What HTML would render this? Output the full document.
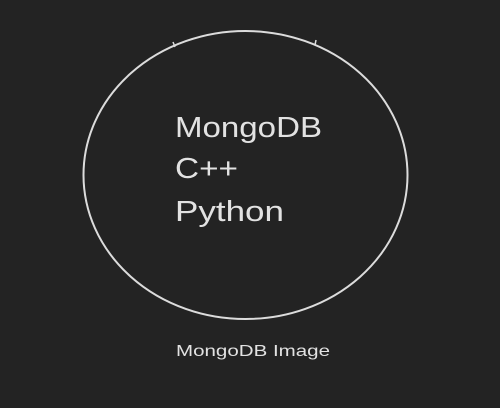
<!DOCTYPE html>
<html><head><style>
body{margin:0;background:#232323;width:500px;height:403px;overflow:hidden}
</style></head><body>
<svg width="500" height="403" xmlns="http://www.w3.org/2000/svg">
<rect width="500" height="403" fill="#232323"/>
<ellipse cx="245.5" cy="175" rx="162" ry="144" fill="none" stroke="#dcdcdc" stroke-width="2"/>
<path d="M173 42 l2 5 M316 40 l-1 5" stroke="#dcdcdc" stroke-width="1.5"/>
<g font-family="'Liberation Sans',sans-serif" fill="#e2e2e2">
<text x="175" y="137" font-size="29" textLength="147" lengthAdjust="spacingAndGlyphs">MongoDB</text>
<text x="175" y="178" font-size="29" textLength="63" lengthAdjust="spacingAndGlyphs">C++</text>
<text x="175" y="221" font-size="29" textLength="109" lengthAdjust="spacingAndGlyphs">Python</text>
<text x="176" y="356" font-size="16" textLength="154" lengthAdjust="spacingAndGlyphs">MongoDB Image</text>
</g>
</svg>
</body></html>
